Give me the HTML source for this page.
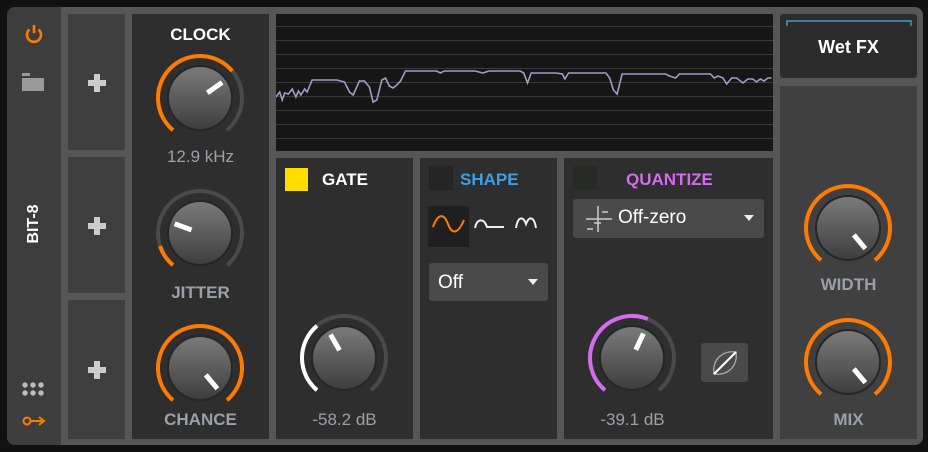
<!DOCTYPE html>
<html><head><meta charset="utf-8"><style>
*{margin:0;padding:0;box-sizing:border-box}
body{width:928px;height:452px;background:#111;position:relative;overflow:hidden;font-family:"Liberation Sans",sans-serif}
.a{position:absolute}
.lbl{position:absolute;font-weight:bold;font-size:17px;text-align:center;color:#9aa0a8}
.w{color:#fff}
</style></head><body>
<div class="a" style="left:7px;top:7px;width:916px;height:438px;background:#565656;border-radius:8px"></div>
<div class="a" style="left:7px;top:7px;width:54px;height:438px;background:#3d3d3d;border-radius:8px 0 0 8px"></div>
<svg class="a" style="left:22px;top:22px" width="24" height="24" viewBox="0 0 24 24"><path d="M7.5 7.5A7 7 0 1 0 16.5 7.5" fill="none" stroke="#ff7a00" stroke-width="2.6"/><line x1="12" y1="3" x2="12" y2="11" stroke="#ff7a00" stroke-width="2.6"/></svg>
<svg class="a" style="left:22px;top:72px" width="22" height="20"><path d="M0 1h8v3h14v15H0z" fill="#9a9a9a"/><rect x="0" y="4" width="22" height="2" fill="#3d3d3d"/></svg>
<div class="a" style="left:14px;top:225px;width:40px;transform:rotate(-90deg);transform-origin:center;text-align:center;color:#fff;font-weight:bold;font-size:16px;margin-top:-10px">BIT-8</div>
<svg class="a" style="left:22px;top:382px" width="24" height="16"><g fill="#bbb"><circle cx="3" cy="3" r="2.7"/><circle cx="11" cy="3" r="2.7"/><circle cx="19" cy="3" r="2.7"/><circle cx="3" cy="11" r="2.7"/><circle cx="11" cy="11" r="2.7"/><circle cx="19" cy="11" r="2.7"/></g></svg>
<svg class="a" style="left:22px;top:413px" width="24" height="16"><circle cx="5" cy="8" r="3.5" fill="none" stroke="#ff7a00" stroke-width="2"/><line x1="9" y1="8" x2="21" y2="8" stroke="#ff7a00" stroke-width="2"/><path d="M17 4l5 4-5 4" fill="none" stroke="#ff7a00" stroke-width="2"/></svg>
<div class="a" style="left:68px;top:14px;width:57px;height:136px;background:#3f3f3f"></div>
<div class="a" style="left:68px;top:157px;width:57px;height:136px;background:#3f3f3f"></div>
<div class="a" style="left:68px;top:300px;width:57px;height:139px;background:#3f3f3f"></div>
<div class="a" style="left:88px;top:80px;width:18px;height:6px;background:#ccc"></div><div class="a" style="left:94px;top:74px;width:6px;height:18px;background:#ccc"></div>
<div class="a" style="left:88px;top:223px;width:18px;height:6px;background:#ccc"></div><div class="a" style="left:94px;top:217px;width:6px;height:18px;background:#ccc"></div>
<div class="a" style="left:88px;top:367px;width:18px;height:6px;background:#ccc"></div><div class="a" style="left:94px;top:361px;width:6px;height:18px;background:#ccc"></div>
<div class="a" style="left:132px;top:14px;width:137px;height:425px;background:#2e2e2e"></div>
<div class="a" style="left:276px;top:14px;width:497px;height:137px;background:#161616"></div>
<div class="a" style="left:276px;top:158px;width:137px;height:281px;background:#2e2e2e"></div>
<div class="a" style="left:420px;top:158px;width:137px;height:281px;background:#2e2e2e"></div>
<div class="a" style="left:564px;top:158px;width:209px;height:281px;background:#2e2e2e"></div>
<div class="a" style="left:780px;top:14px;width:137px;height:64px;background:#2c2c2c;border-radius:3px"></div>
<div class="a" style="left:780px;top:86px;width:137px;height:353px;background:#404040"></div>
<svg class="a" style="left:786px;top:19px" width="126" height="8"><path d="M1 7V2h124v5" fill="none" stroke="#3b7f99" stroke-width="2"/></svg>
<div class="lbl w" style="left:780px;top:37px;width:137px;font-size:18px">Wet FX</div>
<svg class="a" style="left:276px;top:14px" width="497" height="137">
<g stroke="#3a3a3a" stroke-width="1"><line x1="0" y1="12.5" x2="497" y2="12.5"/><line x1="0" y1="26.5" x2="497" y2="26.5"/><line x1="0" y1="40.5" x2="497" y2="40.5"/><line x1="0" y1="54.5" x2="497" y2="54.5"/><line x1="0" y1="68.5" x2="497" y2="68.5"/><line x1="0" y1="82.5" x2="497" y2="82.5"/><line x1="0" y1="96.5" x2="497" y2="96.5"/><line x1="0" y1="110.5" x2="497" y2="110.5"/><line x1="0" y1="124.5" x2="497" y2="124.5"/></g>
<g transform="translate(0,-3) scale(1.245,1)">
<path d="M0 86l3 -5 2 8 2-7 3 1 3-5 3 8 2-6 2 4 3-6 2 3 4-12 20 0 6 2 4 10 3 3 5-14 4 0 4 6 3 15 3-2 4-20 3-2 3 8 3 2 3-3 3-4 4-10 20 0 5 0 3 2 3-2 25 0 6 2 5-2 25 0 3 2 3 10 3-10 20 0 5 1 2 5 3-6 30 0 3 5 3 12 3 4 4-20 35 0 3 2 5 2 3-4 25 0 3 4 3-2 4 2 3 6 4-6 4 0 5 5 4-4 4 0 3 3 3-3 3 2 3-3 3 0" fill="none" stroke="#a09cc8" stroke-width="1.6" vector-effect="non-scaling-stroke"/>
</g>
</svg>
<div class="lbl w" style="left:132px;top:25px;width:137px">CLOCK</div>
<div class="lbl" style="left:132px;top:147px;width:137px;font-weight:normal;font-size:17px">12.9 kHz</div>
<div class="lbl" style="left:132px;top:283px;width:137px">JITTER</div>
<div class="lbl" style="left:132px;top:410px;width:137px">CHANCE</div>
<div class="lbl" style="left:276px;top:410px;width:137px;font-weight:normal">-58.2 dB</div>
<div class="lbl" style="left:564px;top:410px;width:137px;font-weight:normal">-39.1 dB</div>
<div class="lbl" style="left:780px;top:275px;width:137px">WIDTH</div>
<div class="lbl" style="left:780px;top:410px;width:137px">MIX</div>
<div class="a" style="left:285px;top:168px;width:23px;height:23px;background:#ffdd00"></div>
<div class="lbl w" style="left:322px;top:170px">GATE</div>
<div class="a" style="left:429px;top:166px;width:24px;height:24px;background:#262626;border:1px solid #232323"></div>
<div class="lbl" style="left:460px;top:170px;color:#3aa0e6">SHAPE</div>
<div class="a" style="left:573px;top:166px;width:24px;height:24px;background:#282a26"></div>
<div class="lbl" style="left:626px;top:170px;color:#d46cf0">QUANTIZE</div>
<div class="a" style="left:428px;top:206px;width:41px;height:41px;background:#1f1f1f;border-radius:2px"></div>
<svg class="a" style="left:430px;top:210px" width="120" height="30"><path d="M3 17C8 3 14 3 18 14S28 24 34 10" fill="none" stroke="#ff7a00" stroke-width="2"/><path d="M45 18C47 8 54 8 57 17L74 17" fill="none" stroke="#eee" stroke-width="2"/><path d="M86 18C88 6 93 6 96 14C99 6 104 6 106 18" fill="none" stroke="#eee" stroke-width="2"/></svg>
<div class="a" style="left:429px;top:263px;width:119px;height:38px;background:#4a4a4a;border-radius:3px"></div>
<div class="a w" style="left:438px;top:272px;font-size:19px;color:#fff">Off</div>
<svg class="a" style="left:528px;top:279px" width="10" height="6"><path d="M0 0h10L5 6z" fill="#eee"/></svg>
<div class="a" style="left:573px;top:199px;width:191px;height:39px;background:#4a4a4a;border-radius:3px"></div>
<svg class="a" style="left:584px;top:204px" width="30" height="30"><g stroke="#ccc" stroke-width="1.5"><line x1="14" y1="2" x2="14" y2="28"/><line x1="2" y1="15" x2="28" y2="15"/><line x1="18" y1="8" x2="24" y2="8"/><line x1="10" y1="19" x2="17" y2="19"/><line x1="3" y1="25" x2="9" y2="25"/></g></svg>
<div class="a" style="left:618px;top:207px;font-size:19px;color:#fff">Off-zero</div>
<svg class="a" style="left:744px;top:215px" width="10" height="6"><path d="M0 0h10L5 6z" fill="#eee"/></svg>
<div class="a" style="left:701px;top:343px;width:47px;height:39px;background:#4a4a4a;border-radius:3px"></div>
<svg class="a" style="left:710px;top:348px" width="30" height="30"><path d="M4 26C2 12 12 2 26 4C28 18 18 28 4 26z" fill="none" stroke="#aaa" stroke-width="1.3"/><line x1="4" y1="26" x2="26" y2="4" stroke="#fff" stroke-width="2"/></svg>
<svg id="k" class="a" style="left:0;top:0" width="928" height="452">
<defs><linearGradient id="g" x1="0" y1="0" x2="0" y2="1"><stop offset="0" stop-color="#7a7a7a"/><stop offset="1" stop-color="#3e3e3e"/></linearGradient></defs>
</svg>
<script>
var svg=document.getElementById('k'),h='';
function p(cx,cy,r,a){a=a*Math.PI/180;return [cx+r*Math.sin(a),cy-r*Math.cos(a)];}
function arc(cx,cy,r,a1,a2,c){var s=p(cx,cy,r,a1),e=p(cx,cy,r,a2);return '<path d="M'+s[0]+' '+s[1]+'A'+r+' '+r+' 0 '+((a2-a1)>180?1:0)+' 1 '+e[0]+' '+e[1]+'" fill="none" stroke="'+c+'" stroke-width="4"/>';}
function knob(cx,cy,v,c,ind){h+=arc(cx,cy,42,-140,140,'#4a4a4a');h+=arc(cx,cy,42,-140,v,c);
h+='<circle cx="'+cx+'" cy="'+cy+'" r="33" fill="#262626"/><circle cx="'+cx+'" cy="'+cy+'" r="31" fill="url(#g)"/>';
var a=p(cx,cy,9,ind),b=p(cx,cy,27,ind);h+='<line x1="'+a[0]+'" y1="'+a[1]+'" x2="'+b[0]+'" y2="'+b[1]+'" stroke="#fff" stroke-width="5"/>';}
knob(200,98,50,'#ff7a00',55);
knob(200,233,-108,'#ff7a00',-70);
knob(200,368,140,'#ff7a00',140);
knob(344,358,-40,'#ffffff',-30);
knob(632,358,22,'#d46cf0',25);
knob(848,228,140,'#ff7a00',140);
knob(848,362,140,'#ff7a00',140);
svg.insertAdjacentHTML('beforeend',h);
</script>
</body></html>
